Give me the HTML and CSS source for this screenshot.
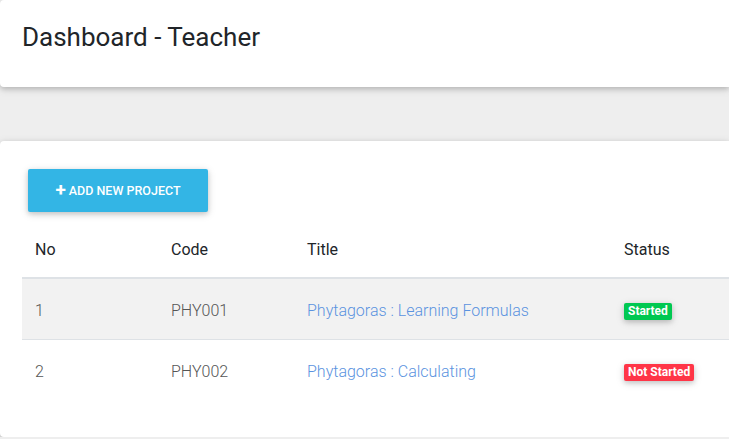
FILE: index.html
```html
<!DOCTYPE html>
<html>
<head>
<meta charset="utf-8">
<link rel="stylesheet" href="styles.css">
</head>
<body>
<div class="page">
  <header class="card header-card">
    <h1 class="page-title">Dashboard - Teacher</h1>
  </header>
  <section class="card main-card">
    <button class="btn-add"><span class="plus">+</span>ADD NEW PROJECT</button>
    <table class="projects">
      <thead>
        <tr>
          <th class="c-no">No</th>
          <th class="c-code">Code</th>
          <th class="c-title">Title</th>
          <th class="c-status">Status</th>
        </tr>
      </thead>
      <tbody>
        <tr class="striped">
          <td>1</td>
          <td>PHY001</td>
          <td><a class="link" href="#">Phytagoras : Learning Formulas</a></td>
          <td><span class="badge badge-green">Started</span></td>
        </tr>
        <tr>
          <td>2</td>
          <td>PHY002</td>
          <td><a class="link" href="#">Phytagoras : Calculating</a></td>
          <td><span class="badge badge-red">Not Started</span></td>
        </tr>
      </tbody>
    </table>
  </section>
</div>
</body>
</html>
```
FILE: styles.css
```css
html, body {
  margin: 0;
  padding: 0;
}
body {
  background: #eeeeee;
  font-family: Roboto, "Liberation Sans", sans-serif;
  color: #212529;
  overflow: hidden;
}
.page {
  display: flex;
  flex-direction: column;
  gap: 54px;
}
.card {
  background: #fff;
  border-radius: 4px 0 0 4px;
  box-shadow: 0 2px 5px 0 rgba(0,0,0,.16), 0 2px 10px 0 rgba(0,0,0,.12);
}
.header-card {
  height: 87px;
  box-sizing: border-box;
  padding: 20px 22px;
}
.page-title {
  margin: 0;
  font-size: 26px;
  font-weight: 400;
  line-height: 34px;
  color: #212529;
}
.main-card {
  height: 296px;
  box-sizing: border-box;
  padding: 28px 0 0 22px;
  display: flex;
  flex-direction: column;
  align-items: flex-start;
  overflow: hidden;
}
.btn-add {
  margin: 0 0 6px 6px;
  width: 180px;
  height: 43px;
  background: #33b5e5;
  color: #fff;
  border: 0;
  border-radius: 2px;
  font-family: Roboto, "Liberation Sans", sans-serif;
  font-size: 12.5px;
  font-weight: 500;
  box-shadow: 0 2px 5px 0 rgba(0,0,0,.16), 0 2px 10px 0 rgba(0,0,0,.12);
  display: flex;
  align-items: center;
  justify-content: center;
  padding: 0;
}
.plus {
  font-size: 19px;
  font-weight: 700;
  margin-right: 3px;
  line-height: 1;
  position: relative;
  top: -1px;
}
.projects {
  width: 100%;
  border-collapse: collapse;
}
.projects th, .projects td {
  text-align: left;
  padding: 0 13px;
  vertical-align: middle;
  font-size: 16px;
}
.projects th {
  height: 56px;
  padding-top: 3px;
  font-weight: 400;
  color: #212529;
  border-bottom: 2px solid #dee2e6;
}
.projects td {
  height: 58px;
  padding-top: 2px;
  font-weight: 300;
  color: #555;
  border-bottom: 1px solid #dee2e6;
}
.projects tbody tr:last-child td {
  border-bottom: 0;
}
.c-no { width: 110px; }
.c-code { width: 110px; }
.c-title { width: 291px; }
.striped td {
  background: #f2f2f2;
}
.link {
  color: #5b93e0;
  text-decoration: none;
}
.badge {
  display: inline-block;
  color: #fff;
  font-size: 12px;
  font-weight: 700;
  padding: 1px 4px;
  border-radius: 2px;
  line-height: 15px;
  box-shadow: 0 2px 5px 0 rgba(0,0,0,.16), 0 2px 10px 0 rgba(0,0,0,.12);
}
.badge-green { background: #00c851; }
.badge-red { background: #ff3547; }
```
